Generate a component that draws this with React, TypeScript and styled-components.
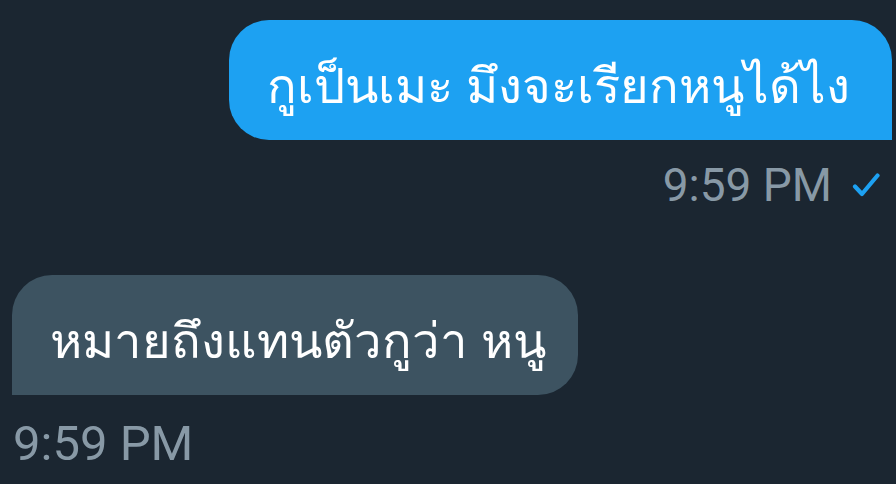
import React from "react";
import styled, { createGlobalStyle } from "styled-components";

const Global = createGlobalStyle`
  html, body { margin: 0; padding: 0; }
  body {
    background: #1b2631;
    width: 896px;
    height: 484px;
    overflow: hidden;
    font-family: "Noto Sans", Roboto, "DejaVu Sans", sans-serif;
  }
`;

const Thread = styled.div`
  display: flex;
  flex-direction: column;
  gap: 45px;
  padding: 20px 4px 0 12px;
`;

const Row = styled.div<{ $out?: boolean }>`
  display: flex;
  flex-direction: column;
  align-items: ${(p) => (p.$out ? "flex-end" : "flex-start")};
`;

const Bubble = styled.div<{ $out?: boolean }>`
  background: ${(p) => (p.$out ? "#1da1f2" : "#3d5361")};
  color: #ffffff;
  height: 120px;
  box-sizing: border-box;
  display: flex;
  align-items: center;
  padding: 12px ${(p) => (p.$out ? "42px" : "32px")} 0 38px;
  border-radius: ${(p) => (p.$out ? "40px 40px 0 40px" : "40px 40px 40px 0")};
  font-size: 49px;
  white-space: nowrap;
`;

const Meta = styled.div<{ $out?: boolean }>`
  display: flex;
  align-items: center;
  gap: 20px;
  color: #8899a6;
  font-family: Roboto, "Liberation Sans", sans-serif;
  font-size: ${(p) => (p.$out ? "46px" : "49px")};
  height: 90px;
  padding: ${(p) => (p.$out ? "0 12px 0 0" : "6px 0 0 1px")};
  box-sizing: border-box;
`;

const Check = () => (
  <svg width="28" height="24" viewBox="0 0 28 24">
    <path d="M3 13.5 L10 21 L25.5 2.5" fill="none" stroke="#1da1f2" strokeWidth="4.2" strokeLinecap="round" strokeLinejoin="round" />
  </svg>
);

export default function App() {
  return (
    <>
      <Global />
      <Thread>
        <Row $out>
          <Bubble $out>กูเป็นเมะ มึงจะเรียกหนูได้ไง</Bubble>
          <Meta $out>9:59 PM<Check /></Meta>
        </Row>
        <Row>
          <Bubble>หมายถึงแทนตัวกูว่า หนู</Bubble>
          <Meta>9:59 PM</Meta>
        </Row>
      </Thread>
    </>
  );
}
